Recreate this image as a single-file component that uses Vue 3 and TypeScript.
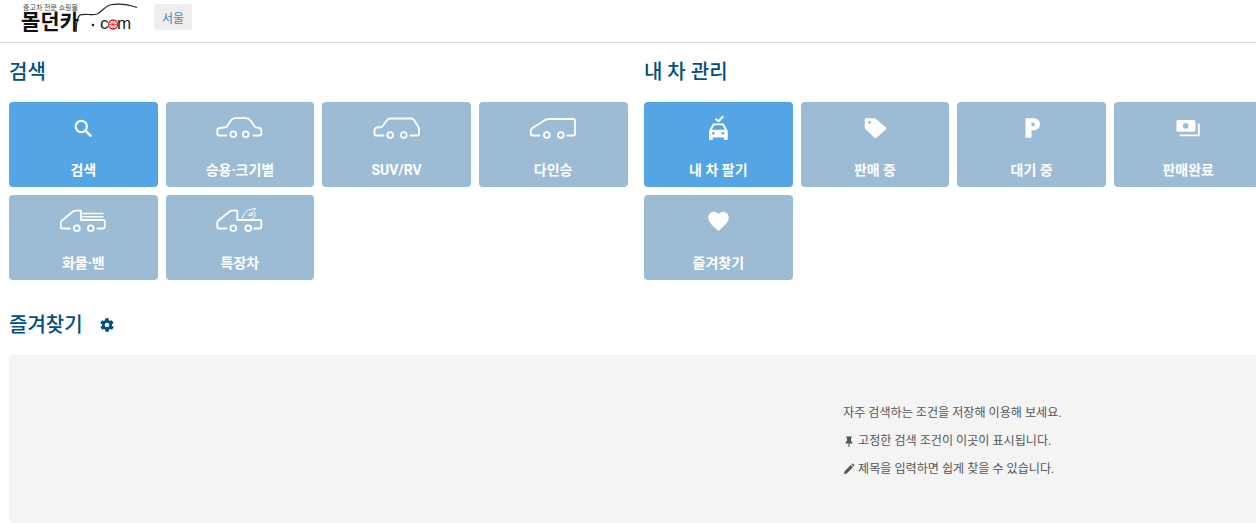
<script setup lang="ts">
interface Tile {
  label: string
  icon: string
  active?: boolean
}

interface Group {
  title: string
  tiles: Tile[]
}

const groups: Group[] = [
  {
    title: '검색',
    tiles: [
      { label: '검색', icon: 'search', active: true },
      { label: '승용·크기별', icon: 'sedan' },
      { label: 'SUV/RV', icon: 'suv' },
      { label: '다인승', icon: 'van' },
      { label: '화물·밴', icon: 'truck' },
      { label: '특장차', icon: 'special' },
    ],
  },
  {
    title: '내 차 관리',
    tiles: [
      { label: '내 차 팔기', icon: 'sell', active: true },
      { label: '판매 중', icon: 'tag' },
      { label: '대기 중', icon: 'parking' },
      { label: '판매완료', icon: 'money' },
      { label: '즐겨찾기', icon: 'heart' },
    ],
  },
]
</script>

<template>
  <div class="page">
    <header class="topbar">
      <div class="logo">
        <svg class="logo-art" width="154" height="42" viewBox="0 0 154 42">
          <path d="M76 32 C77 24 76 18 80 15 C86 13 91 16 97 14 C103 11 105 6 111 4.8 C118 3.5 128 4.5 137 7.5" fill="none" stroke="#222" stroke-width="1.1" />
          <circle cx="93" cy="25" r="1.3" fill="#222" />
          <circle cx="113" cy="24.5" r="4.5" fill="none" stroke="#d8232a" stroke-width="1.3" />
          <path d="M108.5 24.5h9M113 20v9M110 21.5l6 6M116 21.5l-6 6" stroke="#d8232a" stroke-width="0.7" />
        </svg>
        <span class="logo-small">중고차 전문 쇼핑몰</span>
        <span class="logo-name">몰던카</span>
        <span class="logo-c">c</span>
        <span class="logo-m">m</span>
      </div>
      <button class="region">서울</button>
    </header>

    <div class="columns">
      <section v-for="g in groups" :key="g.title">
        <h2>{{ g.title }}</h2>
        <div class="tiles">
          <div v-for="t in g.tiles" :key="t.label" class="tile" :class="{ active: t.active }">
            <svg class="ico" width="48" height="27" viewBox="0 0 48 27" fill="none" stroke="#fff" stroke-width="1.8" stroke-linecap="round" stroke-linejoin="round">
              <template v-if="t.icon === 'search'">
                <circle cx="22.3" cy="12.5" r="5.6" stroke-width="2.2" />
                <path d="M26.5 16.7l5 5" stroke-width="2.6" />
              </template>
              <template v-else-if="t.icon === 'sedan'">
                <path d="M10.5 21.5H3C1.8 21.5 1.3 21 1.3 20V16.5C1.3 15 2.5 14.2 4 14L10.5 13L14.8 6.5C16 4.8 17 4.2 19 4.2H30C32 4.2 33.2 4.8 34.5 6.5L39 13L43.5 14C44.8 14.3 45.3 15 45.3 16V20.3C45.3 21 44.8 21.5 44 21.5H37.5" />
                <circle cx="17.3" cy="20.3" r="2.9" />
                <circle cx="29.7" cy="20.3" r="2.9" />
              </template>
              <template v-else-if="t.icon === 'suv'">
                <path d="M10.5 21.5H3C1.8 21.5 1.5 21 1.5 20V16C1.5 14.5 2.5 13.8 4 13.5L9 13L14 6.2C15 4.9 16 4.5 17.5 4.5H38C39.5 4.5 40.3 4.9 41 6L46 14V20C46 21 45.5 21.5 44.5 21.5H37.5" />
                <circle cx="17.2" cy="21" r="2.9" />
                <circle cx="30.8" cy="21" r="2.9" />
              </template>
              <template v-else-if="t.icon === 'van'">
                <path d="M10.5 21.5H3.3C2.3 21.5 1.8 21 1.8 20V16.5C1.8 15.2 2.4 14.6 3.5 14L13 8C15.5 6 17 5 19.5 5H44C45.5 5 46 5.5 46 7V20C46 21 45.5 21.5 44.5 21.5H38" />
                <circle cx="17.8" cy="21" r="2.9" />
                <circle cx="31.8" cy="21" r="2.9" />
              </template>
              <template v-else-if="t.icon === 'truck'">
                <path d="M11 21.5H3.3C2.3 21.5 1.8 21 1.8 20V15.5C1.8 14.6 2.2 14.1 3 13.5L14 4.5C15 3.8 15.5 3.7 16.5 3.7H22V13H44.5C45.5 13 45.8 13.4 45.8 14V20C45.8 21 45.3 21.5 44.3 21.5H38.5" />
                <path d="M24 6.5H44M24 9.7H44" stroke-width="1.4" />
                <circle cx="17.8" cy="21.3" r="2.9" />
                <circle cx="31.8" cy="21.3" r="2.9" />
              </template>
              <template v-else-if="t.icon === 'special'">
                <path d="M10.5 21.5H3C1.8 21.5 1.3 21 1.3 20V15.5C1.3 14.6 1.7 14.1 2.5 13.5L13.5 4.5C14.5 3.8 15 3.7 16 3.7H21.3V13H44C45 13 45.3 13.4 45.3 14V20C45.3 21 44.8 21.5 43.8 21.5H38" />
                <circle cx="17.3" cy="21.3" r="2.9" />
                <circle cx="32.3" cy="21.3" r="2.9" />
                <path d="M26 13C27 8 29 4 34 2.5L39.5 1.3C38.5 3 37.5 4 38 5C39 5.5 39.3 6.5 39 8C38.5 11 35.5 13 32 13M33 7.5L36.5 5.5L36 8.5H33" stroke-width="1" />
              </template>
              <template v-else-if="t.icon === 'sell'">
                <path d="M22 5.2l2.600 2L28.700 2.800" stroke-width="2" />
                <path d="M15 26V17L19 9.5H29.700L33.700 17V26H30V23.500H18.700V26Z" fill="#fff" stroke="none" />
                <path d="M20.300 11.300H28.400L30.900 15.800H17.800Z" fill="#53a5e6" stroke="none" />
                <circle cx="19.3" cy="19.3" r="1.3" fill="#53a5e6" stroke="none" />
                <circle cx="29" cy="19.3" r="1.3" fill="#53a5e6" stroke="none" />
              </template>
              <template v-else-if="t.icon === 'tag'">
                <path d="M13.8 5.8C13.8 4.8 14.3 4.3 15.3 4.3H23.5C24.2 4.3 24.6 4.5 25.1 5L34.7 13.3C35.3 13.9 35.3 14.8 34.7 15.4L25.6 23.8C25 24.4 24 24.4 23.4 23.8L14.3 15C13.9 14.6 13.8 14.2 13.8 13.5Z" fill="#fff" stroke="none" />
                <circle cx="18.6" cy="8.5" r="1.4" fill="#9cbcd6" stroke="none" />
              </template>
              <template v-else-if="t.icon === 'parking'">
                <path d="M17.5 23.7V4.3H25.5C29 4.3 32 6.5 32 10.2C32 14 29 16.2 25.5 16.2H23.5V23.7Z" fill="#fff" stroke="none" />
                <path d="M23.5 8.5V12.3H25C26 12.3 26.7 11.5 26.7 10.4C26.7 9.3 26 8.5 25 8.5Z" fill="#9cbcd6" stroke="none" />
              </template>
              <template v-else-if="t.icon === 'money'">
                <rect x="12.4" y="6" width="19" height="11.7" rx="1.5" fill="#fff" stroke="none" />
                <circle cx="21.7" cy="11.8" r="2.9" fill="#9cbcd6" stroke="none" />
                <path d="M34.8 9.5V21.3H15.8" stroke-linecap="butt" stroke-linejoin="miter" />
              </template>
              <template v-else-if="t.icon === 'heart'">
                <path d="M24.5 24L22.8 22.5C17 17.5 14.3 14.6 14.3 10.6C14.3 7.2 16.8 4.8 19.8 4.8C21.7 4.8 23.4 5.7 24.5 7.2C25.6 5.7 27.3 4.8 29.2 4.8C32.2 4.8 34.7 7.2 34.7 10.6C34.7 14.6 32 17.5 26.2 22.5Z" fill="#fff" stroke="none" />
              </template>
            </svg>
            <span class="label">{{ t.label }}</span>
          </div>
        </div>
      </section>
    </div>

    <div class="fav-head">
      <h2>즐겨찾기</h2>
      <svg width="16" height="16" viewBox="0 0 24 24" fill="#00507f">
        <path d="M19.4 13c.1-.3.1-.7.1-1s0-.7-.1-1l2.100-1.600c.2-.2.3-.4.1-.7l-2-3.500c-.1-.2-.4-.3-.6-.2l-2.500 1c-.5-.4-1.100-.7-1.700-1l-.4-2.600c0-.2-.3-.4-.5-.4h-4c-.2 0-.5.2-.5.4l-.4 2.600c-.6.3-1.200.6-1.700 1l-2.500-1c-.2-.1-.5 0-.6.2l-2 3.500c-.1.3-.1.5.1.7L4.600 11c-.1.3-.1.7-.1 1s0 .7.1 1l-2.100 1.600c-.2.2-.3.4-.1.7l2 3.500c.1.2.4.3.6.2l2.500-1c.5.4 1.100.7 1.700 1l.4 2.600c0 .2.3.4.5.4h4c.2 0 .5-.2.5-.4l.4-2.600c.6-.3 1.200-.6 1.700-1l2.500 1c.2.1.5 0 .6-.2l2-3.500c.2-.3.1-.5-.1-.7ZM12 15.500a3.500 3.500 0 1 1 0-7 3.500 3.500 0 0 1 0 7Z" />
      </svg>
    </div>

    <div class="fav-box">
      <div class="hint">
        <p>자주 검색하는 조건을 저장해 이용해 보세요.</p>
        <p>
          <svg width="12" height="12" viewBox="0 0 12 12" fill="#555"><path d="M3 1.500h6v1H8v3.500l1.500 1.500v1H6.500V12h-1V8.500H2.500v-1L4 6V2.500H3Z" /></svg>
          고정한 검색 조건이 이곳이 표시됩니다.
        </p>
        <p>
          <svg width="12" height="12" viewBox="0 0 12 12" fill="#555"><path d="M1 11l.6-2.700L7.800 2.100l2.100 2.100-6.200 6.200ZM8.500 1.400l.6-.6c.3-.3.7-.3 1 0l1.100 1.100c.3.3.3.7 0 1l-.6.6Z" /></svg>
          제목을 입력하면 쉽게 찾을 수 있습니다.
        </p>
      </div>
    </div>
  </div>
</template>

<style>
html,
body {
  margin: 0;
  overflow: hidden;
  background: #fff;
}
</style>

<style scoped>
.page {
  width: 1263px;
  height: 523px;
  font-family: Roboto, 'Noto Sans CJK KR', sans-serif;
  overflow: hidden;
}

.topbar {
  display: flex;
  align-items: flex-start;
  height: 42px;
  padding-left: 20px;
  border-bottom: 1px solid #ddd;
}

.logo {
  position: relative;
  width: 134px;
  height: 42px;
  color: #222;
}

.logo-art {
  position: absolute;
  left: -20px;
  top: 0;
}

.logo-small {
  position: absolute;
  left: 3px;
  top: 2px;
  font-size: 7px;
  line-height: 12px;
  color: #444;
  white-space: nowrap;
}

.logo-name {
  position: absolute;
  left: 1px;
  top: 9px;
  font-size: 21px;
  line-height: 26px;
  font-weight: 700;
  color: #111;
  white-space: nowrap;
}

.logo-c,
.logo-m {
  position: absolute;
  top: 14px;
  font-family: 'Liberation Sans', sans-serif;
  font-size: 17px;
  line-height: 20px;
  color: #222;
}

.logo-c {
  left: 80px;
}

.logo-m {
  left: 97px;
}

.region {
  margin-top: 4px;
  height: 26px;
  width: 38px;
  padding: 0;
  border: 0;
  border-radius: 3px;
  background: #eee;
  color: #3f83c9;
  font: inherit;
  font-size: 12px;
}

.columns {
  display: grid;
  grid-template-columns: 618.5px 618.5px;
  column-gap: 16.5px;
  padding: 0 0 0 9px;
}

h2 {
  margin: 0;
  font-size: 20px;
  line-height: 28px;
  font-weight: 500;
  color: #00507f;
}

section h2 {
  margin-top: 15px;
  margin-bottom: 16px;
}

.tiles {
  display: grid;
  grid-template-columns: repeat(4, 1fr);
  grid-auto-rows: 85px;
  gap: 8px;
}

.tile {
  display: flex;
  flex-direction: column;
  align-items: center;
  padding-top: 12px;
  box-sizing: border-box;
  border-radius: 4px;
  background: #9cbcd6;
  color: #fff;
}

.tile.active {
  background: #53a5e6;
}

.label {
  margin-top: 19px;
  font-size: 14px;
  line-height: 20px;
  font-weight: 700;
}

.fav-head {
  display: flex;
  align-items: center;
  gap: 16px;
  margin: 31px 0 16px 9px;
}

.fav-box {
  display: flex;
  height: 168px;
  margin-left: 9px;
  padding: 44px 0 0 834px;
  box-sizing: border-box;
  border-radius: 4px;
  background: #f4f4f4;
}

.hint {
  font-size: 12.1px;
  line-height: 28px;
  color: #555;
  white-space: nowrap;
}

.hint p {
  margin: 0;
}

.hint svg {
  vertical-align: -2px;
}
</style>
